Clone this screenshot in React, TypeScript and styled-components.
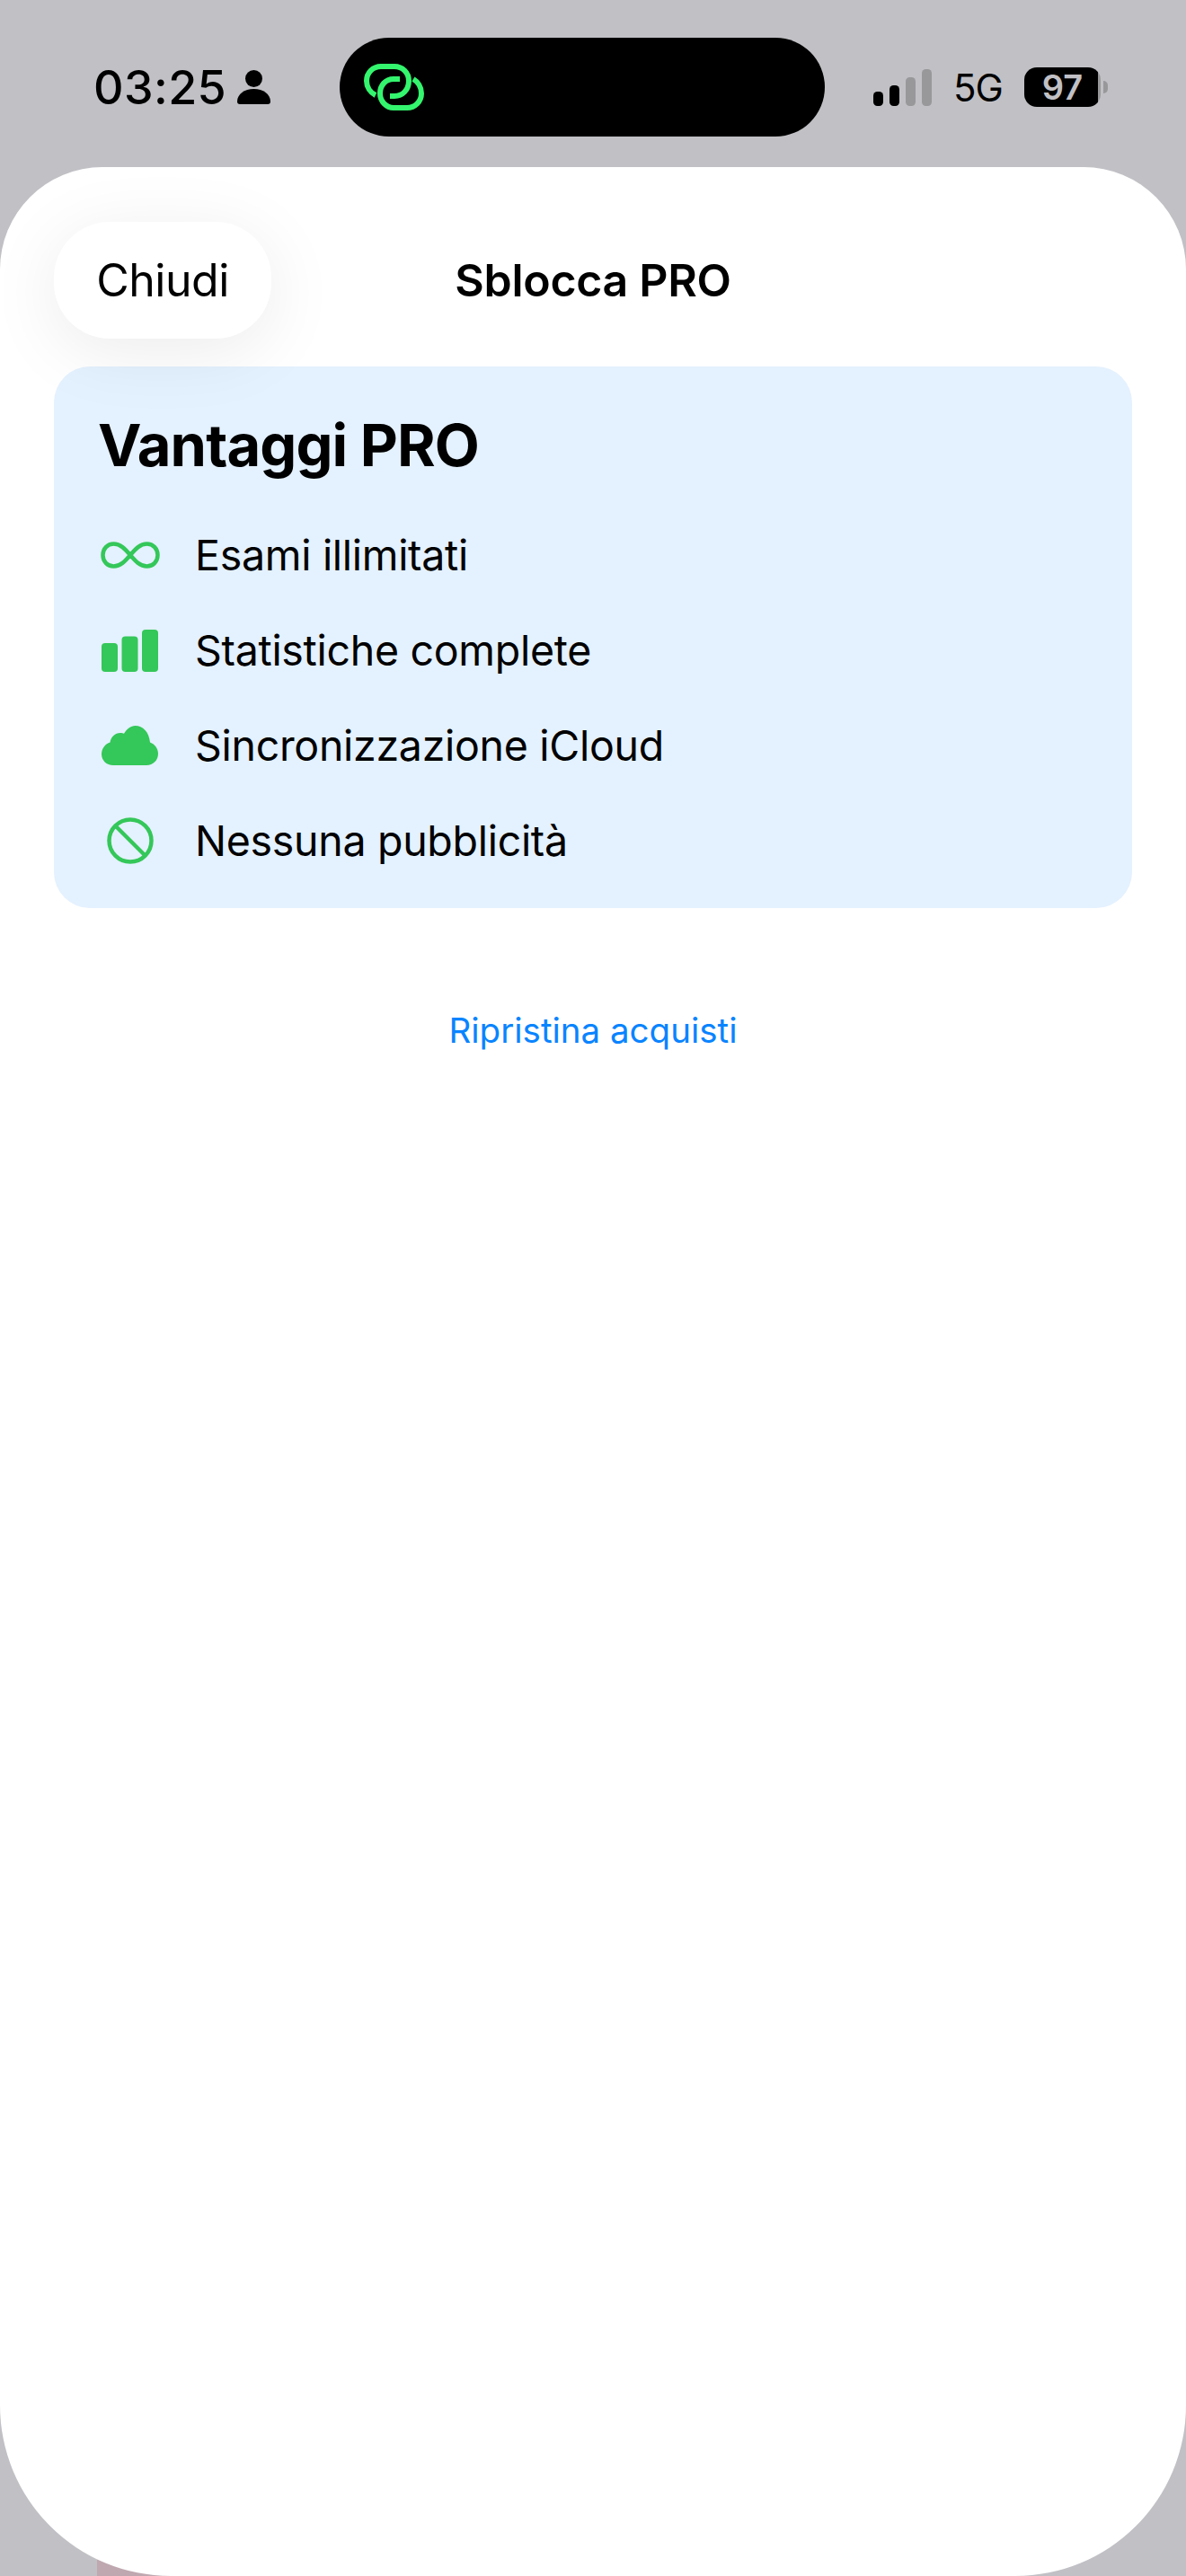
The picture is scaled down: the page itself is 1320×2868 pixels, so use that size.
import React from "react";
import styled, { createGlobalStyle } from "styled-components";

const GlobalStyle = createGlobalStyle`
  html, body {
    margin: 0;
    padding: 0;
    background: #c1c0c5;
    font-family: Inter, "Noto Sans", sans-serif;
    color: #000;
  }
`;

const Screen = styled.div`
  position: relative;
  width: 1320px;
  height: 2868px;
  overflow: hidden;
  display: flex;
  flex-direction: column;
  background: #c1c0c5;
`;

const BackdropPeek = styled.div`
  position: absolute;
  left: 108px;
  bottom: 0;
  width: 500px;
  height: 40px;
  background: #bfa8b0;
`;

const StatusBar = styled.header`
  flex: none;
  height: 186px;
  display: flex;
  padding: 42px 0 0 104px;
  box-sizing: border-box;
`;

const StatusLeft = styled.div`
  width: 274px;
  height: 110px;
  display: flex;
  align-items: center;
  gap: 12px;
`;

const Time = styled.span`
  font-size: 52px;
  font-weight: 550;
  letter-spacing: 0.4px;
`;

const Island = styled.div`
  width: 540px;
  height: 110px;
  border-radius: 55px;
  background: #000;
  display: flex;
  align-items: center;
  padding-left: 27px;
  box-sizing: border-box;
`;

const StatusRight = styled.div`
  height: 110px;
  margin-left: 54px;
  display: flex;
  align-items: center;
`;

const NetworkLabel = styled.span`
  font-size: 42px;
  font-weight: 400;
  margin: 0 24px 0 24px;
  letter-spacing: -1px;
`;

const Battery = styled.div`
  position: relative;
  width: 85px;
  height: 44px;
  border-radius: 14px;
  background: linear-gradient(to right, #000 96%, #98989a 96%);
  display: flex;
  align-items: center;
  justify-content: center;
  font-size: 38px;
  font-weight: 600;
  color: #c1c0c5;

  &::after {
    content: "";
    position: absolute;
    left: 88px;
    top: 15px;
    width: 5px;
    height: 14px;
    border-radius: 0 7px 7px 0;
    background: #98989a;
  }
`;

const Sheet = styled.main`
  position: relative;
  flex: 1;
  background: #fff;
  border-radius: 114px 114px 190px 190px;
  padding: 61px 60px 0;
`;

const SheetHeader = styled.div`
  position: relative;
  z-index: 1;
  display: grid;
  grid-template-columns: 1fr auto 1fr;
  align-items: center;
`;

const CloseButton = styled.button`
  justify-self: start;
  width: 242px;
  height: 130px;
  border: 0;
  border-radius: 62px;
  background: #fff;
  box-shadow: 0 14px 80px rgba(0, 0, 0, 0.08);
  font-family: inherit;
  font-size: 50px;
  font-weight: 400;
  color: #000;
  letter-spacing: -0.5px;
`;

const SheetTitle = styled.h1`
  margin: 0;
  font-size: 50px;
  font-weight: 600;
  letter-spacing: -0.3px;
`;

const BenefitsCard = styled.section`
  margin-top: 31px;
  height: 603px;
  box-sizing: border-box;
  padding: 48px 48px 0 49px;
  border-radius: 40px;
  background: #e4f1fe;
`;

const CardTitle = styled.h2`
  margin: 0 0 42px;
  height: 80px;
  line-height: 80px;
  font-size: 65px;
  font-weight: 700;
  letter-spacing: -0.9px;
`;

const BenefitList = styled.ul`
  list-style: none;
  margin: 0;
  padding: 0;
  display: flex;
  flex-direction: column;
  gap: 26px;
`;

const BenefitRow = styled.li`
  height: 80px;
  display: flex;
  align-items: center;
  gap: 37px;
  font-size: 46.5px;
  font-weight: 400;
  letter-spacing: -0.3px;
`;

const IconSlot = styled.span`
  width: 71px;
  display: flex;
  justify-content: center;
  flex: none;
`;

const RestoreLink = styled.a`
  display: block;
  margin-top: 114px;
  text-align: center;
  font-size: 38.5px;
  line-height: 44px;
  color: #0a84ff;
`;

const green = "#34c759";

const LinkedRings = () => (
  <svg width="67" height="52" viewBox="0 0 67 52" fill="none" stroke="#34f56e" strokeWidth="6">
    <path d="M13 35C7 32 3 26 3 19C3 10 10 3 19 3L34 3C43 3 50 10 50 19C50 29 43 36 34 36L29 36" />
    <path d="M40 17L33 17C24 17 18 24 18 33C18 42 25 49 33 49L48 49C57 49 64 42 64 33C64 26 60 20 55 17" />
  </svg>
);

const PersonGlyph = () => (
  <svg width="37" height="38" viewBox="0 0 37 38" fill="#000">
    <circle cx="18.5" cy="9.5" r="9.5" />
    <path d="M0 35C0 27 8 21 18.5 21C29 21 37 27 37 35C37 37 36 38 34 38L3 38C1 38 0 37 0 35Z" />
  </svg>
);

const SignalBars = () => (
  <svg width="65" height="41" viewBox="0 0 65 41">
    <rect x="0" y="25" width="11" height="16" rx="4.5" fill="#000" />
    <rect x="18" y="18" width="11" height="23" rx="4.5" fill="#000" />
    <rect x="36" y="9" width="11" height="32" rx="4.5" fill="#98989a" />
    <rect x="54" y="0" width="11" height="41" rx="4.5" fill="#98989a" />
  </svg>
);

const InfinityIcon = () => (
  <svg width="66" height="30" viewBox="0 0 66 30" fill="none" stroke={green} strokeWidth="4.5">
    <path d="M33 15C27 8 22 2.5 14.5 2.5C7.5 2.5 2.5 8 2.5 15C2.5 22 7.5 27.5 14.5 27.5C22 27.5 27 22 33 15C39 8 44 2.5 51.5 2.5C58.5 2.5 63.5 8 63.5 15C63.5 22 58.5 27.5 51.5 27.5C44 27.5 39 22 33 15Z" />
  </svg>
);

const ChartIcon = () => (
  <svg width="63" height="47" viewBox="0 0 63 47" fill={green}>
    <rect x="0" y="15" width="18" height="32" rx="4" />
    <rect x="22.5" y="7.5" width="18" height="39.5" rx="4" />
    <rect x="45" y="0" width="18" height="47" rx="4" />
  </svg>
);

const CloudIcon = () => (
  <svg width="63" height="44" viewBox="0 0 63 44" fill={green}>
    <path d="M13 44C5.5 44 0 38.5 0 31.5C0 25 4.5 20 9.5 18.5C10.5 12.5 15 8 21 8C22.5 8 24 8.3 25 8.8C28 3.5 32.5 0 37.5 0C46 0 53 7 54 18.5C59.5 20.5 63 25.5 63 31C63 38.5 57.5 44 50 44Z" />
  </svg>
);

const BanIcon = () => (
  <svg width="52" height="52" viewBox="0 0 52 52" fill="none" stroke={green} strokeWidth="4.5">
    <circle cx="26" cy="26" r="23.5" />
    <path d="M9.5 9.5L42.5 42.5" />
  </svg>
);

const benefits = [
  { label: "Esami illimitati", icon: <InfinityIcon /> },
  { label: "Statistiche complete", icon: <ChartIcon /> },
  { label: "Sincronizzazione iCloud", icon: <CloudIcon /> },
  { label: "Nessuna pubblicità", icon: <BanIcon /> },
];

const App = () => (
  <Screen>
    <GlobalStyle />
    <BackdropPeek />
    <StatusBar>
      <StatusLeft>
        <Time>03:25</Time>
        <PersonGlyph />
      </StatusLeft>
      <Island>
        <LinkedRings />
      </Island>
      <StatusRight>
        <SignalBars />
        <NetworkLabel>5G</NetworkLabel>
        <Battery>97</Battery>
      </StatusRight>
    </StatusBar>
    <Sheet>
      <SheetHeader>
        <CloseButton>Chiudi</CloseButton>
        <SheetTitle>Sblocca PRO</SheetTitle>
        <span />
      </SheetHeader>
      <BenefitsCard>
        <CardTitle>Vantaggi PRO</CardTitle>
        <BenefitList>
          {benefits.map((b) => (
            <BenefitRow key={b.label}>
              <IconSlot>{b.icon}</IconSlot>
              {b.label}
            </BenefitRow>
          ))}
        </BenefitList>
      </BenefitsCard>
      <RestoreLink>Ripristina acquisti</RestoreLink>
    </Sheet>
  </Screen>
);

export default App;
